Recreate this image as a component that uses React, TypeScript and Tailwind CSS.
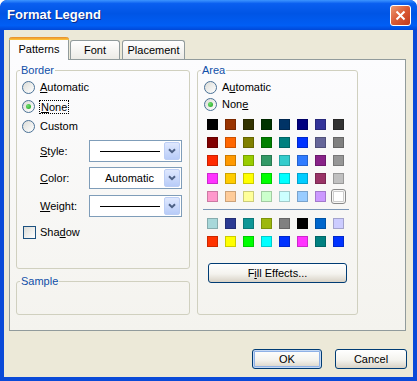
import React from "react";

const palette = [
  ["#000000", "#993300", "#333300", "#003300", "#003366", "#000080", "#333399", "#333333"],
  ["#800000", "#FF6600", "#808000", "#008000", "#008080", "#0033FF", "#666699", "#808080"],
  ["#FF2A00", "#FF9900", "#99CC00", "#339966", "#33CCCC", "#2F7BFF", "#882288", "#969696"],
  ["#FF33FF", "#FFCC00", "#FFFF00", "#00FF00", "#00FFFF", "#00CCFF", "#993366", "#C0C0C0"],
  ["#FF99CC", "#FFCC99", "#FFFF99", "#CCFFCC", "#CCFFFF", "#99CCFF", "#CC99FF", "#FFFFFF"],
];

const extra = [
  ["#A8D8DA", "#2B3A92", "#0E9696", "#9DB80E", "#808080", "#000000", "#0066CC", "#CCCCFF"],
  ["#FF3300", "#FFFF00", "#00FF00", "#00FFFF", "#0033FF", "#FF33FF", "#008080", "#0033FF"],
];

function Radio({ checked }: { checked?: boolean }) {
  return (
    <span className="flex h-[13px] w-[13px] shrink-0 items-center justify-center rounded-full border border-[#4A7196] bg-[linear-gradient(135deg,#DCDCD7,#FFFFFF)]">
      {checked && (
        <span className="h-[5px] w-[5px] rounded-full bg-[radial-gradient(circle_at_35%_35%,#6FE06F,#21A121)]" />
      )}
    </span>
  );
}

function Chevron() {
  return (
    <svg width="8" height="6" viewBox="0 0 8 6">
      <path d="M1 1.2 L4 4.2 L7 1.2" fill="none" stroke="#4D6185" strokeWidth="2" />
    </svg>
  );
}

function Dropdown({ children }: { children: React.ReactNode }) {
  return (
    <div className="flex h-[22px] w-[93px] items-stretch border border-[#7F9DB9] bg-white p-[1px]">
      <div className="flex flex-1 items-center justify-center pl-[4px]">{children}</div>
      <div className="flex w-[16px] items-center justify-center rounded-[2px] border border-[#BCCEF5] bg-[linear-gradient(#DFE8FE,#B8CCF8)]">
        <Chevron />
      </div>
    </div>
  );
}

function Group({
  label,
  className,
  children,
}: {
  label: string;
  className: string;
  children?: React.ReactNode;
}) {
  return (
    <fieldset className={`min-w-0 rounded-[3px] border border-[#D0D0BF] ${className}`}>
      <legend className="ml-[3px] px-[1px] leading-[13px] text-[#104FA8]">{label}</legend>
      {children}
    </fieldset>
  );
}

function Swatch({ color, selected }: { color: string; selected?: boolean }) {
  return (
    <span
      className={`h-[11px] w-[11px] border border-black/20 ${
        selected ? "rounded-[1px] outline outline-1 outline-offset-[1px] outline-[#8A8A8A]" : ""
      }`}
      style={{ backgroundColor: color }}
    />
  );
}

function XPButton({
  children,
  isDefault,
  className,
}: {
  children: React.ReactNode;
  isDefault?: boolean;
  className: string;
}) {
  return (
    <button
      className={`flex h-[20px] items-center justify-center rounded-[3px] border border-[#003C74] bg-[linear-gradient(#FFFFFF,#F4F3EE_55%,#D8D2C6)] ${
        isDefault ? "shadow-[inset_0_0_0_1px_#C4D8F4,inset_0_0_0_2px_#8FB1E6]" : ""
      } ${className}`}
    >
      {children}
    </button>
  );
}

export default function App() {
  return (
    <div className="flex h-[381px] w-[417px] flex-col overflow-hidden rounded-t-[7px] bg-[#0A4AD8] font-['Liberation_Sans',Arial,sans-serif] text-[11px] text-black">
      {/* title bar */}
      <div className="flex h-[30px] shrink-0 items-center justify-between rounded-t-[7px] bg-[linear-gradient(#3D95FF_0%,#0A5FF0_12%,#0055E5_45%,#005EF5_85%,#0048D8_100%)] pl-[7px] pr-[6px]">
        <span className="text-[13px] font-bold text-white [text-shadow:1px_1px_0_#0B2C8A]">
          Format Legend
        </span>
        <div className="flex h-[21px] w-[21px] items-center justify-center rounded-[3px] border border-white bg-[linear-gradient(135deg,#EC9A72,#DA5A34_50%,#C23A1C)]">
          <svg width="11" height="11" viewBox="0 0 11 11">
            <path d="M1.5 1.5 L9.5 9.5 M9.5 1.5 L1.5 9.5" stroke="white" strokeWidth="2" />
          </svg>
        </div>
      </div>

      {/* body */}
      <div className="mx-[4px] mb-[4px] flex flex-1 flex-col bg-[#ECE9D8] pt-[7px]">
        {/* tabs */}
        <div className="relative z-10 ml-[5px] flex h-[22px] items-end">
          <div className="-mb-px flex h-[23px] w-[60px] flex-col rounded-t-[3px] border-x border-[#919B9C] bg-[#FCFCFE]">
            <div className="h-[3px] rounded-t-[3px] bg-[linear-gradient(#E68B2C,#FFC73C)] -mx-px" />
            <div className="flex flex-1 items-center justify-center pb-[2px]">Patterns</div>
          </div>
          <div className="ml-[1px] flex h-[19px] w-[50px] items-center justify-center rounded-t-[3px] border-x border-t border-[#919B9C] bg-[linear-gradient(#FFFFFF,#ECEBE6)]">
            Font
          </div>
          <div className="ml-[2px] flex h-[19px] w-[63px] items-center justify-center rounded-t-[3px] border-x border-t border-[#919B9C] bg-[linear-gradient(#FFFFFF,#ECEBE6)]">
            Placement
          </div>
        </div>

        {/* panel */}
        <div className="ml-[5px] flex h-[272px] w-[397px] gap-[7px] border border-[#919B9C] bg-[linear-gradient(#FCFCFE,#F4F3EE)] pl-[6px] pt-[4px]">
          <div className="flex w-[174px] flex-col">
            <Group label="Border" className="h-[205px]">
              <div className="flex flex-col pl-[5px] pt-[1px]">
                <div className="flex h-[19px] items-center gap-[5px]">
                  <Radio />
                  <span>
                    <span className="underline">A</span>utomatic
                  </span>
                </div>
                <div className="flex h-[19px] items-center gap-[4px]">
                  <Radio checked />
                  <span className="border border-dotted border-black px-[1px] leading-[12px]">
                    <span className="underline">N</span>one
                  </span>
                </div>
                <div className="flex h-[20px] items-center gap-[5px]">
                  <Radio />
                  <span>Custom</span>
                </div>
                <div className="ml-[18px] mt-[4px] flex flex-col">
                  <div className="flex items-center">
                    <span className="w-[49px]">
                      <span className="underline">S</span>tyle:
                    </span>
                    <Dropdown>
                      <span className="h-px w-[60px] bg-black" />
                    </Dropdown>
                  </div>
                  <div className="mt-[5px] flex items-center">
                    <span className="w-[49px]">
                      <span className="underline">C</span>olor:
                    </span>
                    <Dropdown>
                      <span>Automatic</span>
                    </Dropdown>
                  </div>
                  <div className="mt-[6px] flex items-center">
                    <span className="w-[49px]">
                      <span className="underline">W</span>eight:
                    </span>
                    <Dropdown>
                      <span className="h-px w-[60px] bg-black" />
                    </Dropdown>
                  </div>
                </div>
                <div className="mt-[7px] flex items-center gap-[4px] pl-[1px]">
                  <span className="h-[13px] w-[13px] border border-[#1C5180] bg-[linear-gradient(135deg,#DCDCD7,#FFFFFF)]" />
                  <span>
                    Sha<span className="underline">d</span>ow
                  </span>
                </div>
              </div>
            </Group>
            <Group label="Sample" className="mt-[6px] h-[40px]" />
          </div>

          <Group label="Area" className="h-[251px] w-[161px]">
            <div className="flex flex-col pl-[6px] pt-[2px]">
              <div className="flex h-[17px] items-center gap-[5px]">
                <Radio />
                <span>
                  A<span className="underline">u</span>tomatic
                </span>
              </div>
              <div className="flex h-[17px] items-center gap-[5px]">
                <Radio checked />
                <span>
                  Non<span className="underline">e</span>
                </span>
              </div>
            </div>
            <div className="ml-[9px] mt-[6px] grid w-fit grid-cols-[repeat(8,11px)] gap-[7px]">
              {palette.flat().map((c, i) => (
                <Swatch key={i} color={c} selected={i === 39} />
              ))}
            </div>
            <div className="ml-[5px] mt-[7px] h-px w-[146px] bg-[#7A96B6]" />
            <div className="ml-[9px] mt-[8px] grid w-fit grid-cols-[repeat(8,11px)] gap-[7px]">
              {extra.flat().map((c, i) => (
                <Swatch key={i} color={c} />
              ))}
            </div>
            <XPButton className="ml-[10px] mt-[16px] w-[139px]">
              <span>
                F<span className="underline">i</span>ll Effects...
              </span>
            </XPButton>
          </Group>
        </div>

        {/* buttons */}
        <div className="mt-[18px] flex justify-end gap-[13px] pr-[6px]">
          <XPButton isDefault className="w-[70px]">
            OK
          </XPButton>
          <XPButton className="w-[72px]">Cancel</XPButton>
        </div>
      </div>
    </div>
  );
}
